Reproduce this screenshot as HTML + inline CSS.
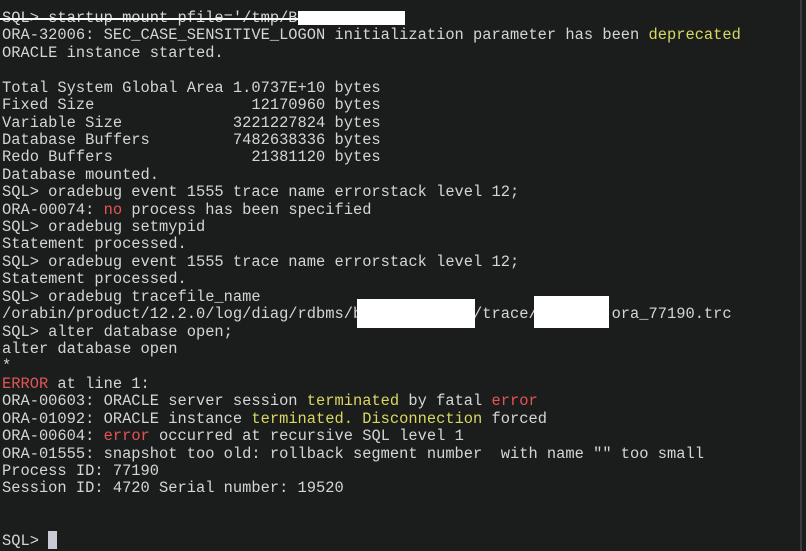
<!DOCTYPE html>
<html><head><meta charset="utf-8"><style>
html,body{margin:0;padding:0;background:#1b1c1c;width:806px;height:551px;overflow:hidden}
body{position:relative}
pre{margin:0;position:absolute;left:2px;top:10px;font-family:"Liberation Mono",monospace;font-size:15.4px;line-height:17.42px;color:#d4d6d6;white-space:pre}
.y{color:#d8d860}.r{color:#e35555}
.box{position:absolute;background:#fff}
.cur{position:absolute;left:48px;top:531px;width:9px;height:18px;background:#c9cad3}
.strike{position:absolute;left:0;top:18px;width:298px;height:2px;background:#fff}
.edge{position:absolute;right:4px;top:0;width:2px;height:551px;background:#3a3a3a}
</style></head><body>
<pre>SQL&gt; startup mount pfile='/tmp/B
ORA-32006: SEC_CASE_SENSITIVE_LOGON initialization parameter has been <span class="y">deprecated</span>
ORACLE instance started.

Total System Global Area 1.0737E+10 bytes
Fixed Size                 12170960 bytes
Variable Size            3221227824 bytes
Database Buffers         7482638336 bytes
Redo Buffers               21381120 bytes
Database mounted.
SQL&gt; oradebug event 1555 trace name errorstack level 12;
ORA-00074: <span class="r">no</span> process has been specified
SQL&gt; oradebug setmypid
Statement processed.
SQL&gt; oradebug event 1555 trace name errorstack level 12;
Statement processed.
SQL&gt; oradebug tracefile_name
/orabin/product/12.2.0/log/diag/rdbms/b            /trace/        ora_77190.trc
SQL&gt; alter database open;
alter database open
*
<span class="r">ERROR</span> at line 1:
ORA-00603: ORACLE server session <span class="y">terminated</span> by fatal <span class="r">error</span>
ORA-01092: ORACLE instance <span class="y">terminated. Disconnection</span> forced
ORA-00604: <span class="r">error</span> occurred at recursive SQL level 1
ORA-01555: snapshot too old: rollback segment number  with name "" too small
Process ID: 77190
Session ID: 4720 Serial number: 19520


SQL&gt; </pre>
<div class="strike"></div>
<div class="box" style="left:298px;top:11px;width:107px;height:14px"></div>
<div class="box" style="left:357px;top:299px;width:118px;height:29px"></div>
<div class="box" style="left:534px;top:296px;width:75px;height:32px"></div>
<div class="cur"></div>
<div class="edge"></div>
</body></html>
